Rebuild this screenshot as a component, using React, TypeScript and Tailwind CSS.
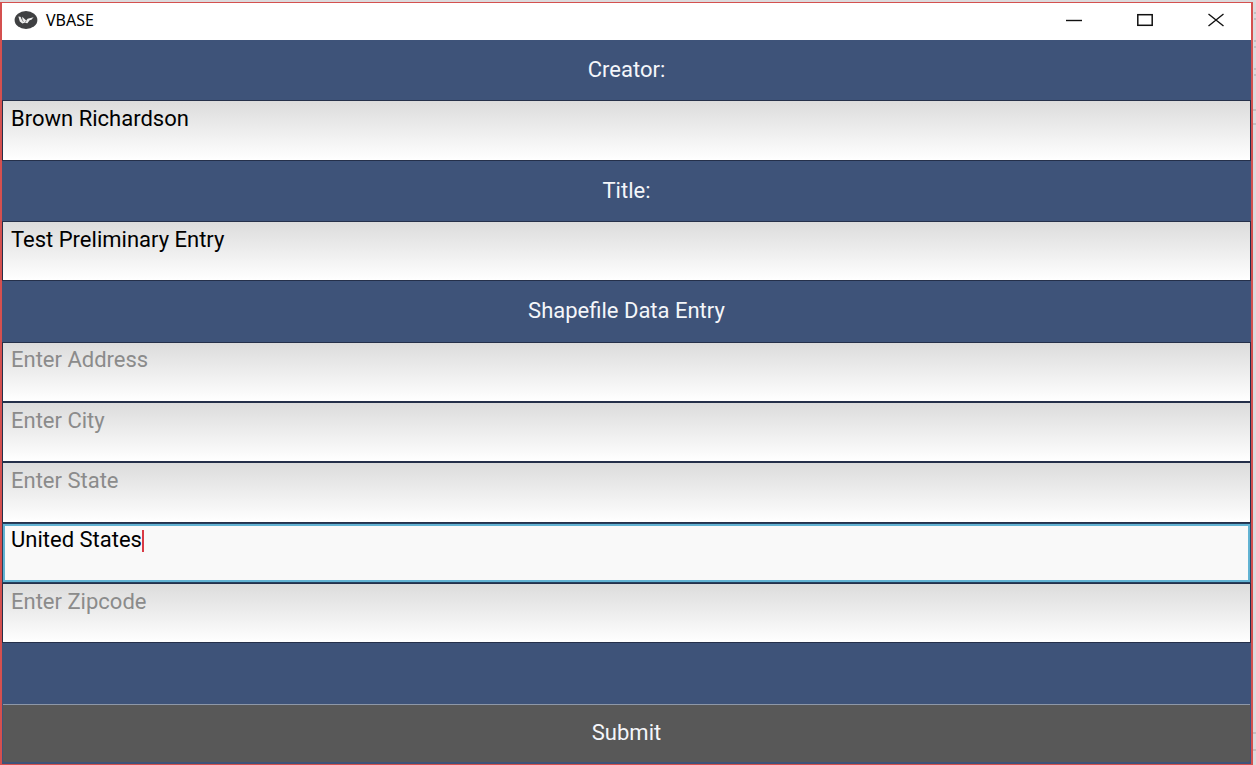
import { useState } from "react";

function Logo() {
  return (
    <svg viewBox="0 0 24 20" className="h-5 w-6 shrink-0" aria-hidden="true">
      <ellipse cx="12" cy="10" rx="11.4" ry="9" fill="#3f4042" />
      <path d="M4.4 6.6 6.4 6.8 8.4 9.8 8.2 6.8 12.2 10.6 13.6 8.8 19.6 7.2 17.4 9.8 15.6 10.2 13.4 13.2 10.6 12.8 8.4 13.4 5.8 11.4Z" fill="#f0f0f0" />
      <path d="M7.2 8 9.4 11.8M12.2 10.6 11.2 12.6" stroke="#3f4042" strokeWidth="0.6" />
    </svg>
  );
}

function TitleBar() {
  return (
    <header className="flex h-[37px] shrink-0 items-center bg-white pb-1 pl-3">
      <Logo />
      <h1 className="flex-1 pl-2 font-['Noto_Sans',sans-serif] text-base leading-5 text-black">VBASE</h1>
      <button type="button" aria-label="Minimize" className="flex h-full w-[71px] items-center justify-center">
        <svg viewBox="0 0 16 14" className="h-3.5 w-4"><path d="M0 7.5H16" stroke="#111" strokeWidth="1.4" /></svg>
      </button>
      <button type="button" aria-label="Maximize" className="flex h-full w-[71px] items-center justify-center">
        <svg viewBox="0 0 16 14" className="h-3.5 w-4"><rect x="0.8" y="1.7" width="14.4" height="10.6" fill="none" stroke="#111" strokeWidth="1.5" /></svg>
      </button>
      <button type="button" aria-label="Close" className="flex h-full w-[71px] items-center justify-center">
        <svg viewBox="0 0 16 14" className="h-3.5 w-4"><path d="M0.5 1 15.5 13M15.5 1 0.5 13" stroke="#111" strokeWidth="1.4" /></svg>
      </button>
    </header>
  );
}

function Heading({ children }: { children: string }) {
  return <h2 className="flex items-center justify-center text-[#f4f6fa]">{children}</h2>;
}

type FieldProps = { label: string; initial?: string; placeholder?: string };

function Field({ label, initial = "", placeholder }: FieldProps) {
  const [value, setValue] = useState(initial);
  return (
    <input
      type="text"
      aria-label={label}
      value={value}
      placeholder={placeholder}
      onChange={(e) => setValue(e.target.value)}
      className="h-full w-full min-w-0 border border-[#25304a] bg-linear-to-b from-[#dcdcdc] to-white px-2 pb-6 text-black outline-none placeholder:text-[#8b8b8b]"
    />
  );
}

function ActiveField({ label, initial }: { label: string; initial: string }) {
  const [value, setValue] = useState(initial);
  return (
    <label className="flex border border-[#25405f] bg-[#f9f9f9]">
      <span className="flex flex-1 items-start border-2 border-[#62b3d3] px-1.5 pt-0.5">
        <input
          type="text"
          aria-label={label}
          value={value}
          onChange={(e) => setValue(e.target.value)}
          className="field-sizing-content bg-transparent leading-6 text-black caret-transparent outline-none"
        />
        <span className="mt-0.5 h-[22px] w-0.5 bg-[#d93a45]" />
      </span>
    </label>
  );
}

function BackgroundEdge() {
  return (
    <svg className="h-full w-[3px] shrink-0" aria-hidden="true">
      <path d="M1 11H3M1 17H3M1 39H3M1 45H3M1 67H3M1 73H3M0 108H3M0 122H3M0 731H3M0 748H3" stroke="#a9a4a6" />
    </svg>
  );
}

export default function App() {
  return (
    <div className="flex h-screen min-h-[600px] bg-[#dcdadc] pt-0.5 font-[Roboto,sans-serif] text-[22px] leading-6">
      <main className="flex min-w-0 flex-1 flex-col border-x-2 border-y border-[#d4504f] bg-[#3e5379]">
        <TitleBar />
        <form className="grid min-h-0 flex-1 auto-rows-fr grid-cols-1" onSubmit={(e) => e.preventDefault()}>
          <Heading>Creator:</Heading>
          <Field label="Creator" initial="Brown Richardson" />
          <Heading>Title:</Heading>
          <Field label="Title" initial="Test Preliminary Entry" />
          <Heading>Shapefile Data Entry</Heading>
          <Field label="Address" placeholder="Enter Address" />
          <Field label="City" placeholder="Enter City" />
          <Field label="State" placeholder="Enter State" />
          <ActiveField label="Country" initial="United States" />
          <Field label="Zipcode" placeholder="Enter Zipcode" />
          <div />
          <div className="flex px-px pb-0.5">
            <button type="submit" className="flex-1 rounded-b-xs border-t border-[#8d97a8] bg-[#585858] text-[#f4f6fa]">
              Submit
            </button>
          </div>
        </form>
      </main>
      <BackgroundEdge />
    </div>
  );
}
